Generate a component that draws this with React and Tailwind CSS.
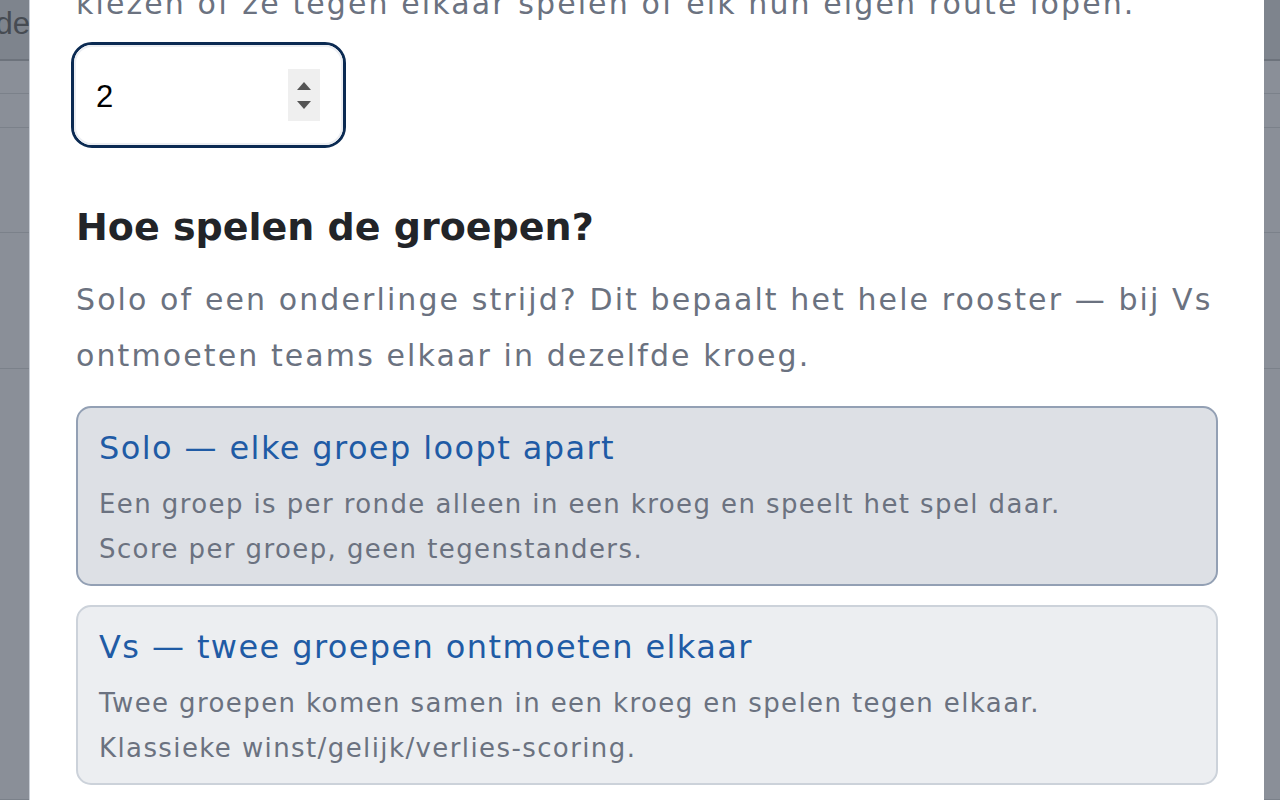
import React, { useState } from 'react';

// Rows of the table behind the dialog, seen through the dimmed backdrop
const backdropRows = [
  { h: 'h-[33px]' },
  { h: 'h-[34px]' },
  { h: 'h-[105px]' },
  { h: 'h-[136px]' },
  { h: 'flex-1' },
];

const Backdrop = ({ width, label }) => (
  <div className={`${width} shrink-0 flex flex-col h-full bg-[#8a8f98] overflow-hidden`}>
    <div className="h-[61px] shrink-0 bg-[#7e848d] border-b-2 border-[#6d737c] flex items-start justify-end pt-[4px]">
      {label && (
        <span className="text-[31px] leading-[40px] text-[#464b52] font-['Liberation_Sans',sans-serif] -mr-[1px]">
          {label}
        </span>
      )}
    </div>
    {backdropRows.map((row, i) => (
      <div key={i} className={`${row.h} shrink-0 border-b border-[#7b818a]`} />
    ))}
  </div>
);

const Stepper = ({ value }) => (
  <div className="w-[275px] h-[106px] -ml-[5px] rounded-[21px] border-[3px] border-[#0b2a52] bg-white">
    <div className="h-full rounded-[18px] border-2 border-[#eceef2] flex items-center pl-[20px] pr-[21px]">
      <span className="flex-1 pt-[4px] text-[31px] text-black font-['Liberation_Sans',sans-serif]">{value}</span>
      <div className="w-[32px] h-[52px] bg-[#efefef] flex flex-col items-center justify-center gap-[11px]">
        <svg width="14" height="8" viewBox="0 0 14 8"><path d="M7 0 L14 8 L0 8 Z" fill="#555" /></svg>
        <svg width="14" height="8" viewBox="0 0 14 8"><path d="M0 0 L14 0 L7 8 Z" fill="#555" /></svg>
      </div>
    </div>
  </div>
);

const modes = [
  {
    id: 'solo',
    title: 'Solo — elke groep loopt apart',
    lines: ['Een groep is per ronde alleen in een kroeg en speelt het spel daar.', 'Score per groep, geen tegenstanders.'],
  },
  {
    id: 'vs',
    title: 'Vs — twee groepen ontmoeten elkaar',
    lines: ['Twee groepen komen samen in een kroeg en spelen tegen elkaar.', 'Klassieke winst/gelijk/verlies-scoring.'],
  },
];

export default function App() {
  const [mode, setMode] = useState('solo');

  return (
    <div className="w-[1280px] h-[800px] overflow-hidden flex font-['DejaVu_Sans',sans-serif]">
      <Backdrop width="w-[29px]" label="de" />

      <main className="flex-1 bg-white border-l border-[#c9ced6] px-[46px] overflow-hidden">
        <p className="-mt-[24px] text-[30px] leading-[56px] tracking-[2.1px] text-[#6b7280] whitespace-nowrap">
          kiezen of ze tegen elkaar spelen of elk hun eigen route lopen.
        </p>

        <div className="mt-[10px]">
          <Stepper value={2} />
        </div>

        <h2 className="mt-[55px] text-[38px] leading-[48px] font-bold text-[#222428]">
          Hoe spelen de groepen?
        </h2>

        <p className="mt-[21px] text-[30px] leading-[56px] tracking-[2.1px] text-[#6b7280]">
          Solo of een onderlinge strijd? Dit bepaalt het hele rooster — bij Vs ontmoeten teams elkaar in dezelfde kroeg.
        </p>

        <div className="mt-[22px] flex flex-col gap-[19px]">
          {modes.map((m) => {
            const active = mode === m.id;
            return (
              <button
                key={m.id}
                onClick={() => setMode(m.id)}
                className={`h-[180px] text-left rounded-[15px] border-2 px-[21px] pt-[2px] ${
                  active ? 'bg-[#dde0e5] border-[#93a0b4]' : 'bg-[#eceef1] border-[#ccd2da]'
                }`}
              >
                <div className="text-[32px] leading-[52px] tracking-[1.4px] text-[#1f5ba5]">{m.title}</div>
                <div className="mt-[8px] text-[26px] leading-[45px] tracking-[1.4px] text-[#6b7280]">
                  {m.lines.map((l) => (
                    <div key={l}>{l}</div>
                  ))}
                </div>
              </button>
            );
          })}
        </div>
      </main>

      <Backdrop width="w-[16px]" />
    </div>
  );
}
